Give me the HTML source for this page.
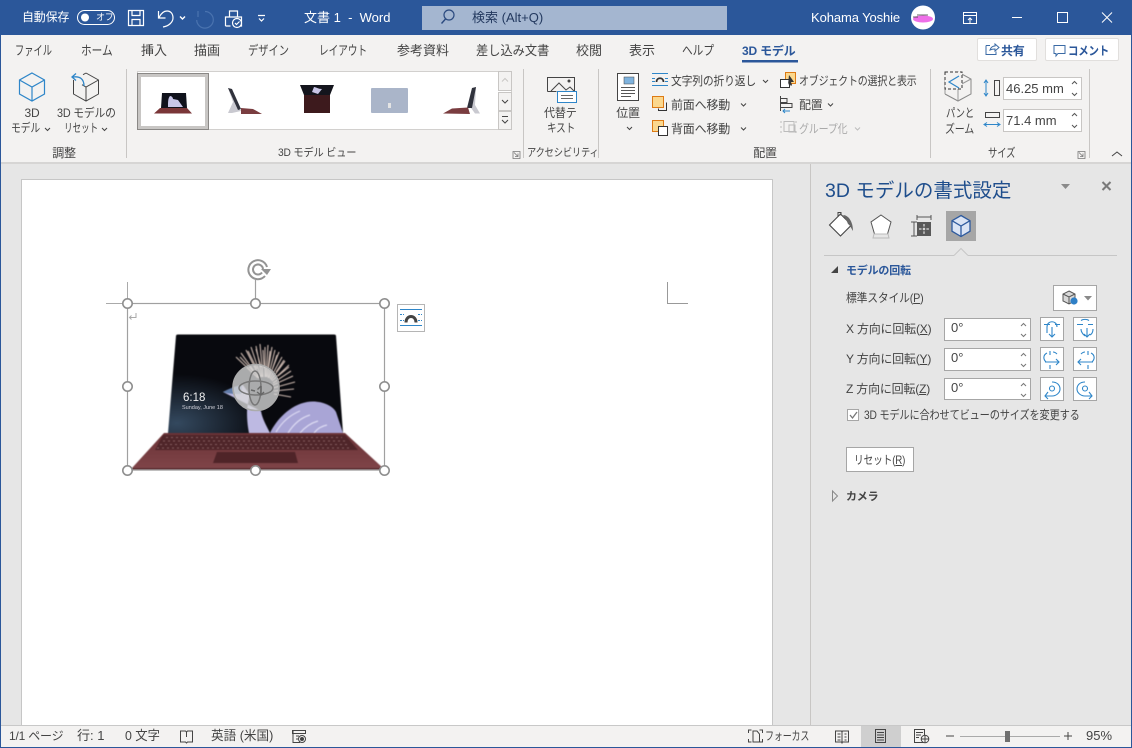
<!DOCTYPE html>
<html lang="ja"><head><meta charset="utf-8"><title>文書 1 - Word</title>
<style>
html,body{margin:0;padding:0;width:1132px;height:748px;overflow:hidden;background:#e6e6e6}
.a{position:absolute}
.t{position:absolute;white-space:nowrap;font:12px/16px "Liberation Sans","Noto Sans CJK JP",sans-serif;color:#444;letter-spacing:-.2px;transform-origin:0 50%}
.m{font-size:13px;letter-spacing:0}
.w{color:#fff}
.c{transform:translateX(-50%);text-align:center}
.s{font-size:11px}
.b{font-weight:bold}
u{text-underline-offset:1px}
svg{position:absolute;left:0;top:0}
</style></head><body>
<div class="a" style="left:0;top:0;width:1132px;height:35px;background:#2b579a"></div>
<div class="a" style="left:0;top:35px;width:1132px;height:127px;background:#f3f2f1"></div>
<div class="a" style="left:0;top:162px;width:1132px;height:2px;background:#d6d5d4"></div>
<div class="a" style="left:22px;top:180px;width:750px;height:546px;background:#fff;box-shadow:0 0 0 1px #c6c6c6"></div>
<div class="a" style="left:810px;top:164px;width:322px;height:561px;background:#e6e6e6;border-left:1px solid #c8c6c4"></div>
<div class="a" style="left:0;top:725px;width:1132px;height:22px;background:#f3f2f1;border-top:1px solid #c8c8c8;box-sizing:border-box"></div>
<div class="a" style="left:861px;top:726px;width:40px;height:21px;background:#cfcfcf"></div>
<div class="a" style="left:0;top:747px;width:1132px;height:1px;background:#2b579a"></div>
<div class="a" style="left:0;top:35px;width:1px;height:713px;background:#2b579a"></div>
<div class="a" style="left:1131px;top:35px;width:1px;height:713px;background:#2b579a"></div>
<div class="a" style="left:422px;top:6px;width:305px;height:24px;background:#a4b6d0"></div>
<div class="a" style="left:137px;top:71px;width:375px;height:59px;background:#fff;box-sizing:border-box;border:1px solid #d2d0ce"></div>
<div class="a" style="left:137px;top:73px;width:72px;height:57px;box-sizing:border-box;background:#fff;border:1px solid #8a8886;box-shadow:inset 0 0 0 3px #c8c6c4"></div>
<div class="a" style="left:977px;top:38px;width:60px;height:23px;box-sizing:border-box;background:#fff;border:1px solid #e1dfdd;border-radius:2px"></div>
<div class="a" style="left:1045px;top:38px;width:74px;height:23px;box-sizing:border-box;background:#fff;border:1px solid #e1dfdd;border-radius:2px"></div>
<div class="a" style="left:1003px;top:77px;width:79px;height:23px;box-sizing:border-box;background:#fff;border:1px solid #c8c6c4"></div>
<div class="a" style="left:1003px;top:109px;width:79px;height:23px;box-sizing:border-box;background:#fff;border:1px solid #c8c6c4"></div>
<div class="a" style="left:946px;top:211px;width:30px;height:30px;background:#a6a6a6"></div>

<svg width="1132" height="748" viewBox="0 0 1132 748" fill="none">
<defs>
<radialGradient id="g1" cx="0.05" cy="0.9" r="0.5"><stop offset="0" stop-color="#34495f"/><stop offset="1" stop-color="#08090e"/></radialGradient>
<linearGradient id="k1" x1="0" y1="0" x2="0" y2="1"><stop offset="0" stop-color="#6a3236"/><stop offset="1" stop-color="#7f4448"/></linearGradient>
</defs>
<!-- title bar -->
<rect x="77.500" y="10.500" width="37" height="14" rx="7" stroke="#fff"/>
<circle cx="85" cy="17.500" r="4" fill="#fff"/>
<g stroke="#fff" stroke-width="1.200">
<path d="M128.500 10.500h15v15h-15zM132 10.500v5h8v-5M132 25.500v-6h8v6"/>
<path d="M158.500 11v7h7M159 17.500c2-4 5-6.500 8-6.500 4 0 6 3 6 7 0 4-4 8-10 9"/>
<path d="M180 16.500l2.500 2.500 2.500-2.500" stroke-width="1.400"/>
<path d="M225.500 26v-9h16v9h-5M229.500 17v-6h8v6M225.500 26h5"/>
<circle cx="237" cy="23" r="4.500" fill="#2b579a"/>
<path d="M235 23l1.500 1.500 3-3"/>
<path d="M258 15.500h7M259 18.500l2.500 2.500 2.500-2.500"/>
</g>
<path d="M205 11.500A8.300 8.300 0 1 1 196.700 20M198 11v6" stroke="#4a73af" stroke-width="1.200"/>
<circle cx="449" cy="15" r="5" stroke="#2b4a7f" stroke-width="1.200"/><path d="M445.500 19l-4 4.500" stroke="#2b4a7f" stroke-width="1.400"/>
<circle cx="923" cy="17.500" r="12" fill="#fff"/>
<ellipse cx="923" cy="19" rx="10" ry="3.500" fill="#ee6fe8"/><path d="M913 17h5M917 15h11" stroke="#333" stroke-width=".8"/>
<g stroke="#fff">
<path d="M963.500 12.500h13v11h-13zM963.500 15.500h13M970 23v-5M968 20l2-2 2 2"/>
<path d="M1012 17.500h10"/>
<path d="M1057.500 12.500h10v10h-10z"/>
<path d="M1102 12.500l10 10M1112 12.500l-10 10"/>
</g>
<rect x="742" y="60" width="56" height="2.500" fill="#2b579a"/>
<!-- share / comment -->
<path d="M986 45.500h4M986 45.500v9h10v-3M990 50c1-3 3-4 5-4v-2l4 3.500-4 3.500v-2c-2 0-3 0-5 1z" stroke="#3a6aa5"/>
<path d="M1054 45.500h11v8h-7l-2 2.500v-2.500h-2z" stroke="#3a6aa5"/>
<!-- separators -->
<path d="M126.500 69v89M523.500 69v89M598.500 69v89M930.500 69v89M1089.500 69v89" stroke="#c8c6c4"/>
<!-- 3D model icons -->
<g stroke="#2e86c9" stroke-width="1.200"><path d="M32 73l12.500 7v14l-12.500 7-12.500-7v-14zM19.500 80l12.500 7 12.500-7M32 87v14"/></g>
<g stroke="#444" stroke-width="1"><path d="M86 73l12.500 7v14l-12.500 7-12.500-7v-14M83 74.700l3-1.700M98.500 80l-12.500 7-4-2.300M86 87v14"/></g>
<path d="M84 86c0-7-4-10-11-9M76 73.500l-4 3.500 4 3.500" stroke="#2e86c9" stroke-width="1.300"/>
<path d="M45 128l2.500 2.500 2.500-2.500" stroke="#444"/>
<path d="M102 128l2.500 2.500 2.500-2.500" stroke="#444"/>
<!-- gallery thumbs -->
<path d="M162 93h24l1 15h-26z" fill="#10121c"/><path d="M168 107c0-5 0-9 2-11 2 0 3 2 3 3l5 1 5 7z" fill="#c8c6e8"/>
<path d="M160 108h27l5 5.500h-38z" fill="#7a3638"/>
<path d="M228 88l3 1 10 22 -9 2h-4l5-11z" fill="#c9c9d0"/><path d="M228 88l4 1 9 20-3 1z" fill="#30323c"/><path d="M241 108l12 1 9 5h-21z" fill="#7a3d40"/>
<path d="M300 85h34l-4 10h-26z" fill="#14151d"/><path d="M304 95h26v18h-26z" fill="#3d1a1d"/><path d="M314 87c2 0 4 2 8 2l-4 5-6-2z" fill="#c9c5e6"/>
<rect x="371" y="88" width="37" height="25" rx="1" fill="#aab5c9"/><rect x="388" y="103" width="3" height="5" fill="#e4e4e4"/>
<path d="M473 88l3-1-1 18 5 8.500h-5l-5-7-2 1z" fill="#c9c9d0"/><path d="M472 88l4-1-4 21h-5z" fill="#30323c"/><path d="M443 113.500l9-5 16-1 2 6.500z" fill="#7a3d40"/>
<!-- gallery scroll -->
<g stroke="#c8c6c4" fill="#f3f2f1"><path d="M498.500 71.500h13v19h-13z"/><path d="M498.500 92.500h13v18h-13z"/><path d="M498.500 111.500h13v18h-13z"/></g>
<path d="M502 81.500l3-3 3 3" stroke="#c8c6c4"/>
<path d="M502 100l3 3 3-3M502 116.500h6M502 120l3 3 3-3" stroke="#444"/>
<path d="M513 151.500h7v7h-7zM514 152.500l4 4M518 153.500v3h-3" stroke="#777" stroke-width=".8"/>
<path d="M1078 151.500h7v7h-7zM1079 152.500l4 4M1083 153.500v3h-3" stroke="#777" stroke-width=".8"/>
<!-- alt text -->
<path d="M547.500 91.500v-14h27v14" stroke="#444"/><path d="M547.500 91.500h9M551 91l8-8 7 7 4-3 4 4" stroke="#444"/><circle cx="569" cy="81" r="1.500" fill="#444"/>
<rect x="557.500" y="91.500" width="19" height="11" fill="#fff" stroke="#2e86c9"/><path d="M561 95.500h12M561 98.500h12" stroke="#666"/>
<!-- position -->
<rect x="617.500" y="73.500" width="21" height="27" fill="#fff" stroke="#444"/><rect x="624" y="77" width="10" height="7" fill="#7fb3de" stroke="#444" stroke-width=".5"/>
<path d="M621 87.500h14M621 90.500h14M621 93.500h14M621 96.500h10" stroke="#555"/>
<path d="M627 127l2.500 2.500 2.500-2.500" stroke="#444"/>
<!-- arrange icons -->
<path d="M652 73.500h16M652 85.500h16" stroke="#2e86c9"/><path d="M652 78.500h3M665 78.500h3M652 81.500h3M665 81.500h3" stroke="#2e86c9"/><path d="M656.500 82c0-5 7-5 7 0" stroke="#333" stroke-width="1.800"/>
<path d="M763 80l2.500 2.500 2.500-2.500" stroke="#444"/>
<rect x="652.500" y="96.500" width="11" height="11" fill="#fbd88e" stroke="#dd7a14"/><path d="M666.500 102.500v8h-8v-2" stroke="#333"/>
<path d="M741 103.500l2.500 2.500 2.500-2.500M741 127.500l2.500 2.500 2.500-2.500" stroke="#444"/>
<rect x="652.500" y="120.500" width="11" height="11" fill="#fbd88e" stroke="#dd7a14"/><rect x="658.500" y="126.500" width="9" height="9" fill="#fff" stroke="#333"/>
<rect x="785.500" y="72.500" width="10" height="11" fill="#fbd88e" stroke="#dd7a14"/><rect x="780.500" y="79.500" width="9" height="8" fill="#fff" stroke="#333"/><path d="M789 75l5 7-3 0 1 3-1 1-2-3-1 2z" fill="#333"/>
<path d="M780.500 96v15M781 98.500h6v4h-6M781 103.500h11v4h-11" stroke="#444"/><path d="M783 111h7M785 109l-2 2 2 2" stroke="#2e86c9"/>
<path d="M828 103.500l2.500 2.500 2.500-2.500" stroke="#444"/>
<g stroke="#bcbcbc"><path d="M781 121v2M781 126v2M781 131v2M796 121v2M796 131v2M784 121.500h10v10h-10zM789 125h6v7h-6z"/></g>
<path d="M855 127.500l2.500 2.500 2.500-2.500" stroke="#bcbcbc"/>
<!-- pan zoom -->
<path d="M958 72l13 7v15l-13 7-13-7" stroke="#888"/><path d="M945 94v-15l13 7v15M958 86l13-7" stroke="#999"/>
<rect x="945" y="72" width="17" height="17" fill="#f3f2f1" stroke="#333" stroke-dasharray="3 2"/><path d="M959 76l-10 6 10 6" stroke="#2e86c9" stroke-width="1.200"/>
<!-- size icons -->
<path d="M986 81v14M984 83l2-3 2 3M984 93l2 3 2-3" stroke="#2e86c9"/><rect x="994.500" y="80.500" width="5" height="15" stroke="#444"/>
<rect x="985.500" y="112.500" width="14" height="5" stroke="#444"/><path d="M985 124.500h14M987 122.500l-3 2 3 2M997 122.500l3 2-3 2" stroke="#2e86c9"/>
<path d="M1072 84l2.500-2.500 2.500 2.500M1072 93l2.500 2.500 2.500-2.500M1072 116l2.500-2.500 2.500 2.500M1072 125l2.500 2.500 2.500-2.500" stroke="#555"/>
<path d="M1112 156l5-4 5 4" stroke="#444"/>

<!-- doc marks -->
<path d="M127.500 282v21M106 303.500h21" stroke="#aaa"/>
<path d="M667.500 282v21M667 303.500h21" stroke="#999"/>
<path d="M136 313v4.500h-6M131.500 315.500l-2 2 2 2" stroke="#aaa"/>
<!-- laptop -->
<g style="filter:blur(.45px)">
<path d="M176 336q0-1.500 2-1.500h156q2 0 2 1.500l7 97h-175z" fill="url(#g1)"/>
<g stroke="#ecd6ca" stroke-width="1.100" stroke-opacity=".85">
<path d="M258 378l-22-21M259 378l-18-25M260 378l-14-28M261 377l-10-30M262 377l-6-31M263 377l-3-33M265 377l0-30M266 377l2-32M267 377l5-30M268 378l7-28M269 378l10-26M270 379l12-22M271 380l14-19M272 381l17-16M273 383l18-12M273 385l20-9M273 388l22-6M274 391l20-2M274 394l17 3M240 357l14 15M248 351l9 18M256 349l5 18M263 350l1 18M270 351l-2 17M277 355l-5 15M284 360l-8 12M289 367l-11 9"/>
</g>
<path d="M223 392c6-3 13-6 20-7l7 10c-1 5-3 10-3 18 0 8 1 15 2 20h21c-4-8-8-15-9-22z" fill="#bdb9e2"/>
<path d="M223 392c6-3 12-6 19-7l-1 9c-6 0-13 0-18-2z" fill="#607ba8"/>
<path d="M270 433c6-13 20-28 37-31 13-2 25 3 29 10l7 21z" fill="#a9a5d6"/>
<path d="M276 432c6-10 14-17 24-21M288 433c5-8 12-15 22-18M300 433c5-6 11-10 18-12M314 433c3-4 8-7 13-8" stroke="#dddbf3" stroke-width="1.200"/>
<path d="M164 433h181l38 35h-251z" fill="url(#k1)"/>
<path d="M163 435h182l13 15h-203z" fill="#4f2529"/>
<g stroke="#c9a7a7" stroke-width=".8" stroke-opacity=".6" stroke-dasharray="2 3"><path d="M166 437.500h176M163 441h182M160 444.500h188M157 448h194"/></g>
<path d="M217 452h78l3 11h-85z" fill="#4f2428"/>
<path d="M132 468h251l1 2h-253z" fill="#5c3034"/>
</g>
<circle cx="256" cy="387.500" r="23" fill="#d9d9d9" fill-opacity=".78" stroke="#ababab" stroke-width="1.600"/>
<ellipse cx="256" cy="388" rx="17" ry="7" stroke="#777" stroke-width="1.500"/>
<ellipse cx="255" cy="388" rx="6" ry="17" stroke="#777" stroke-width="1.500"/>
<path d="M261 386l-3.500 3.500M261 386v8M257 392l4 3 3-3" stroke="#666" stroke-width="1.400"/><path d="M255 391l-4-1" stroke="#666" stroke-width="1.500"/>
<!-- selection -->
<rect x="127.500" y="303.500" width="257" height="166.500" stroke="#a0a0a0" stroke-width="1.200"/>
<path d="M255.500 280v23" stroke="#a0a0a0" stroke-width="1.200"/>
<g stroke="#8e8e8e" stroke-width="1.600" fill="#fff">
<circle cx="127.500" cy="303.500" r="4.700"/><circle cx="255.500" cy="303.500" r="4.700"/><circle cx="384.500" cy="303.500" r="4.700"/>
<circle cx="127.500" cy="386.500" r="4.700"/><circle cx="384.500" cy="386.500" r="4.700"/>
<circle cx="127.500" cy="470.500" r="4.700"/><circle cx="255.500" cy="470.500" r="4.700"/><circle cx="384.500" cy="470.500" r="4.700"/>
</g>
<g stroke="#949494" stroke-width="2" fill="none"><path d="M265 276a9.500 9.500 0 1 1 2-9"/><path d="M263 269a5 5 0 1 0-1 3.500"/></g>
<path d="M261 269h10l-4 6z" fill="#949494"/>
<rect x="397.500" y="304.500" width="27" height="27" fill="#fff" stroke="#b5b5b5"/>
<path d="M400 309.500h22M400 325.500h22" stroke="#2e86c9"/><path d="M400 314.500h4M418 314.500h4M400 320.500h4M418 320.500h4" stroke="#2e86c9" stroke-dasharray="2 1"/>
<path d="M406 322.500c0-8 10-8 10 0" stroke="#444" stroke-width="3"/>
<!-- pane -->
<path d="M1061 184h9l-4.500 5z" fill="#8a8a8a"/>
<path d="M1102.500 182l8 8M1110.500 182l-8 8" stroke="#7a7a7a" stroke-width="2"/>
<path d="M840.500 214l11 11-11 11-11-11z" fill="#fff" stroke="#444" stroke-width="1.100"/><path d="M838 217v-4.500h3v3" stroke="#444"/><path d="M843 215c5 0 10 6 10 16-2-3-3-6-5-7-1-3-3-6-5-9z" fill="#666"/>
<path d="M881 215l10 7-3.500 12h-13l-3.500-12z" fill="#fff" stroke="#555"/><path d="M874 234h14l1 4h-16z" fill="#e6e6e6" stroke="#bbb"/>
<path d="M911 222h6M914 222v14M911 236h6M917 217h14M917 215v5M931 215v5" stroke="#555"/>
<rect x="917" y="222" width="14" height="14" fill="#595959"/><path d="M924 224v10M919 229h10" stroke="#fff" stroke-dasharray="2.500 1.200"/>
<path d="M961 215.500l9 5.200v10.500l-9 5.300-9-5.300v-10.500z" fill="#dbe4f4" stroke="#2e5a9e" stroke-width="1.300"/><path d="M952 220.700l9 5.300 9-5.300M961 226v10.500" stroke="#2e5a9e" stroke-width="1.300"/>
<path d="M824 255.500h130M968 255.500h149" stroke="#c6c6c6"/><path d="M954 255.500l7-7 7 7" fill="#e6e6e6" stroke="#c6c6c6"/>
<path d="M838 266v7h-7z" fill="#444"/>
<path d="M832.500 491v10l5-5z" fill="#e6e6e6" stroke="#888"/>
<rect x="1053.500" y="285.500" width="43" height="25" fill="#fff" stroke="#a6a6a6"/>
<path d="M1069 291l6 3v7l-6 3-6-3v-7z" fill="#d8d8d8" stroke="#555"/><path d="M1063 294l6 3 6-3M1069 297v7" stroke="#555"/><circle cx="1074" cy="301" r="3.600" fill="#2e7fc6"/>
<path d="M1084 296h8l-4 4.500z" fill="#8a8a8a"/>
<g fill="#fff" stroke="#a6a6a6">
<rect x="944.500" y="318.500" width="86" height="22"/><rect x="944.500" y="348.500" width="86" height="22"/><rect x="944.500" y="378.500" width="86" height="21"/>
<rect x="1040.500" y="317.500" width="23" height="23"/><rect x="1073.500" y="317.500" width="23" height="23"/>
<rect x="1040.500" y="347.500" width="23" height="23"/><rect x="1073.500" y="347.500" width="23" height="23"/>
<rect x="1040.500" y="377.500" width="23" height="23"/><rect x="1073.500" y="377.500" width="23" height="23"/>
<rect x="846.500" y="447.500" width="67" height="24"/>
<rect x="847.500" y="409.500" width="11" height="11"/>
</g>
<path d="M850 415l2.500 3 4.500-6" stroke="#777" stroke-width="1.300"/>
<path d="M1021 326l2.500-2.500 2.500 2.500M1021 334l2.500 2.500 2.500-2.500M1021 356l2.500-2.500 2.500 2.500M1021 364l2.500 2.500 2.500-2.500M1021 386l2.500-2.500 2.500 2.500M1021 394l2.500 2.500 2.500-2.500" stroke="#777"/>
<g stroke="#2e86c9" stroke-width="1.100">
<path d="M1044 324.500h6M1055 324.500h5M1047 333v-6c0-7 10-7 10 0M1052 327v10M1049 334l3 3 3-3"/>
<path d="M1077 324.500h6M1088 324.500h5M1081 320.500c2-1.500 6-1.500 8 0M1081 329c0 4 3 6 4 7M1093 329c0 3-1 5-3 6M1087 328v9M1084 334l3 3 3-3"/>
<path d="M1050 351v4M1050 365v4M1047 353c-4 2-4 6-1 9M1045 362h14M1056 359l3 3-3 3M1053 352c2 0 3 1 4 2"/>
<path d="M1088 351v4M1088 365v4M1091 353c4 2 4 6 1 9M1093 362h-15M1081 359l-3 3 3 3M1085 352c-2 0-3 1-4 2"/>
<path d="M1052 382c5 0 8 3 8 7s-4 7-8 7h-7M1048 392l-3 4 3 3"/><circle cx="1052" cy="388.500" r="2.500"/>
<path d="M1085 382c-5 0-8 3-8 7s4 7 8 7h7M1089 392l3 4-3 3"/><circle cx="1085" cy="388.500" r="2.500"/>
</g>
<!-- status -->
<g stroke="#444" stroke-width="1">
<path d="M180.500 731v11h5l1 1 1-1h5v-11h-5l-1 1-1-1z"/><path d="M186.500 732v5"/>
<path d="M292.500 730.500h13v3h-13zM293 730.500v12h7M296 736h3M296 739h2"/><circle cx="302" cy="739" r="3.500"/><circle cx="302" cy="739" r="1.500" fill="#444"/>
<path d="M748.500 733v-3h3M762.500 733v-3h-3M748.500 739v3h3M762.500 739v3h-3M753 742v-11h4l2.500 3v8z"/>
<path d="M835.500 731h6l.5 1 .5-1h6v11h-6l-.5 1-.5-1h-6zM842 732v10M837.500 734h3M837.500 737h3M837.500 740h3M844.500 734h2M844.500 737h2M844.500 740h2"/>
<path d="M875.500 729.500h10v13h-10zM877 732.500h7M877 735h7M877 737.500h7M877 740h7"/>
<path d="M914.500 729.500h10v13h-10zM916 732.500h7M916 735h5M916 737.500h3"/><circle cx="925" cy="739" r="3.800" fill="#f3f2f1"/><path d="M921 739h8M925 735.500v7"/>
<path d="M946 736h8M1064 736h8M1068 732v8"/>
</g>
<path d="M960 736.500h100" stroke="#aaa"/><rect x="1005" y="731" width="5" height="11" fill="#707070"/>
</svg>

<span class="t w" style="left:22px;top:9px">自動保存</span>
<span class="t w" style="left:96px;top:11px;font-size:9px;line-height:13px">オフ</span>
<span class="t w m" style="left:304px;top:10px">文書 1&nbsp; -&nbsp; Word</span>
<span class="t m" style="left:472px;top:10px;color:#23395f">検索 (Alt+Q)</span>
<span class="t w m" style="left:811px;top:10px;letter-spacing:-.1px">Kohama Yoshie</span>

<span class="t m" style="left:15px;top:43px;transform:scaleX(.71)">ファイル</span>
<span class="t m" style="left:81px;top:43px;transform:scaleX(.82)">ホーム</span>
<span class="t m" style="left:141px;top:43px">挿入</span>
<span class="t m" style="left:194px;top:43px">描画</span>
<span class="t m" style="left:248px;top:43px;transform:scaleX(.79)">デザイン</span>
<span class="t m" style="left:319px;top:43px;transform:scaleX(.74)">レイアウト</span>
<span class="t m" style="left:397px;top:43px">参考資料</span>
<span class="t m" style="left:476px;top:43px;transform:scaleX(.94)">差し込み文書</span>
<span class="t m" style="left:576px;top:43px">校閲</span>
<span class="t m" style="left:629px;top:43px">表示</span>
<span class="t m" style="left:682px;top:43px;transform:scaleX(.82)">ヘルプ</span>
<span class="t b" style="left:742px;top:43px;color:#2b579a">3D モデル</span>
<span class="t b" style="left:1001px;top:43px;color:#2b579a">共有</span>
<span class="t b" style="left:1068px;top:43px;color:#2b579a;transform:scaleX(.87)">コメント</span>

<span class="t c" style="left:32px;top:105px">3D</span>
<span class="t" style="left:11px;top:120px;transform:scaleX(.82)">モデル</span>
<span class="t" style="left:57px;top:105px;transform:scaleX(.9)">3D モデルの</span>
<span class="t" style="left:64px;top:120px;transform:scaleX(.72)">リセット</span>
<span class="t c" style="left:64px;top:145px">調整</span>
<span class="t s" style="left:278px;top:145px;transform:scaleX(.93)">3D モデル ビュー</span>
<span class="t" style="left:544px;top:105px;transform:scaleX(.92)">代替テ</span>
<span class="t" style="left:547px;top:120px;transform:scaleX(.8)">キスト</span>
<span class="t s" style="left:527px;top:145px;transform:scaleX(.84)">アクセシビリティ</span>
<span class="t c" style="left:628px;top:105px">位置</span>
<span class="t" style="left:671px;top:73px;transform:scaleX(.9)">文字列の折り返し</span>
<span class="t" style="left:671px;top:97px">前面へ移動</span>
<span class="t" style="left:671px;top:121px">背面へ移動</span>
<span class="t" style="left:799px;top:73px;transform:scaleX(.83)">オブジェクトの選択と表示</span>
<span class="t" style="left:799px;top:97px">配置</span>
<span class="t" style="left:799px;top:121px;color:#aaa;transform:scaleX(.83)">グループ化</span>
<span class="t c" style="left:765px;top:145px">配置</span>
<span class="t" style="left:946px;top:105px;transform:scaleX(.78)">パンと</span>
<span class="t" style="left:945px;top:121px;transform:scaleX(.83)">ズーム</span>
<span class="t m" style="left:1006px;top:81px;width:58px;overflow:hidden">46.25 mm</span>
<span class="t m" style="left:1006px;top:113px">71.4 mm</span>
<span class="t" style="left:988px;top:145px;transform:scaleX(.78)">サイズ</span>

<span class="t" style="left:183px;top:391px;color:#f0f0f0;font-size:11.500px;line-height:14px;letter-spacing:0">6:18</span>
<span class="t" style="left:182px;top:404px;color:#d0d0d8;font-size:5.500px;line-height:8px;letter-spacing:0">Sunday, June 18</span>

<span class="t" style="left:825px;top:179px;font-size:19.500px;line-height:24px;color:#1f4e8c;letter-spacing:0">3D モデルの書式設定</span>
<span class="t b s" style="left:846px;top:263px;color:#2b579a">モデルの回転</span>
<span class="t" style="left:846px;top:290px;transform:scaleX(.9)">標準スタイル(<u>P</u>)</span>
<span class="t" style="left:846px;top:321px">X 方向に回転(<u>X</u>)</span>
<span class="t" style="left:846px;top:351px">Y 方向に回転(<u>Y</u>)</span>
<span class="t" style="left:846px;top:381px">Z 方向に回転(<u>Z</u>)</span>
<span class="t m" style="left:951px;top:320px">0°</span>
<span class="t m" style="left:951px;top:350px">0°</span>
<span class="t m" style="left:951px;top:380px">0°</span>
<span class="t" style="left:864px;top:407px;transform:scaleX(.85)">3D モデルに合わせてビューのサイズを変更する</span>
<span class="t" style="left:854px;top:452px;transform:scaleX(.81)">リセット(<u>R</u>)</span>
<span class="t b s" style="left:846px;top:489px;color:#444">カメラ</span>

<span class="t" style="left:9px;top:728px">1/1 ページ</span>
<span class="t m" style="left:77px;top:728px">行: 1</span>
<span class="t m" style="left:125px;top:728px;transform:scaleX(.95)">0 文字</span>
<span class="t m" style="left:211px;top:728px;transform:scaleX(.97)">英語 (米国)</span>
<span class="t" style="left:765px;top:728px;transform:scaleX(.75)">フォーカス</span>
<span class="t m" style="left:1086px;top:728px">95%</span>
</body></html>
